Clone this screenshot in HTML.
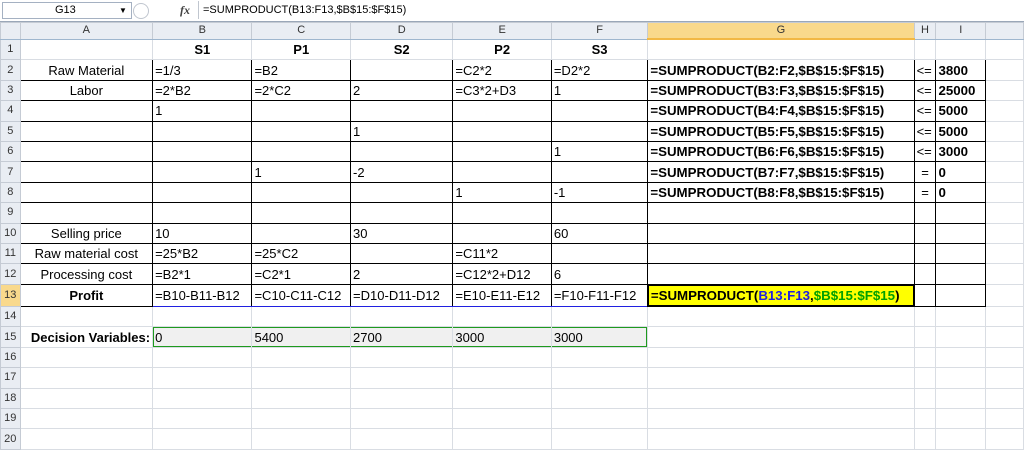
<!DOCTYPE html>
<html><head><meta charset="utf-8"><style>
body{margin:0;width:1024px;height:442px;overflow:hidden;background:#fff;font-family:"Liberation Sans",sans-serif;position:relative}
#fb{position:absolute;left:0;top:0;width:1024px;height:21px;background:#fff;border-bottom:1px solid #9aa7b8}
#nb{position:absolute;left:2px;top:2px;width:128px;height:15px;border:1px solid #a5b1c2;font-size:11px;line-height:15px}
table{position:absolute;left:0;top:22px;border-collapse:collapse;table-layout:fixed}
td{border:1px solid #d9dde3;font-size:13px;padding:0 2px;white-space:nowrap;overflow:hidden;height:19.4px;line-height:19px;color:#000}
tr.h td{height:15px;line-height:15px;background:#e9edf3;color:#333;font-size:11px;text-align:center;border-color:#c5cbd4;border-bottom:1px solid #9eb6ce}
td.rh{background:#e9edf3;color:#333;font-size:11px;text-align:center;border-color:#c5cbd4;padding:0}
td.b{border:1px solid #000}
.c{text-align:center}.bo{font-weight:bold}
.g{font-weight:bold;font-size:13.3px}
td.v{background:#f0f0f0;box-shadow:inset 0 1px 0 #1e9a1e,inset 0 -1px 0 #1e9a1e}
</style></head><body>
<div id="fb">
<div id="nb"><span style="position:absolute;left:52px">G13</span><span style="position:absolute;left:116px;font-size:8px">▼</span></div>
<div style="position:absolute;left:133px;top:3px;width:14px;height:14px;border:1px solid #c0c6cf;border-radius:8px"></div>
<div style="position:absolute;left:180px;top:3px;font-size:12px;font-style:italic;font-family:'Liberation Serif',serif;font-weight:bold;color:#444">fx</div>
<div style="position:absolute;left:198px;top:1px;width:826px;height:18px;border-left:1px solid #c0c6cf"></div>
<div style="position:absolute;left:203px;top:4px;font-size:11px">=SUMPRODUCT(B13:F13,$B$15:$F$15)</div>
</div>
<table>
<colgroup><col style="width:20px"><col style="width:133px"><col style="width:100px"><col style="width:99px"><col style="width:103px"><col style="width:99px"><col style="width:97px"><col style="width:267px"><col style="width:22px"><col style="width:50px"><col style="width:40px"></colgroup>
<tr class="h"><td></td><td>A</td><td>B</td><td>C</td><td>D</td><td>E</td><td>F</td><td style="background:#f9d98c;border-bottom:2px solid #f2b845">G</td><td>H</td><td>I</td><td></td></tr>
<tr><td class="rh">1</td><td></td><td class="c bo">S1</td><td class="c bo">P1</td><td class="c bo">S2</td><td class="c bo">P2</td><td class="c bo">S3</td><td></td><td></td><td></td><td></td></tr>
<tr><td class="rh">2</td><td class="b c">Raw Material</td><td class="b">=1/3</td><td class="b">=B2</td><td class="b"></td><td class="b">=C2*2</td><td class="b">=D2*2</td><td class="b g">=SUMPRODUCT(B2:F2,$B$15:$F$15)</td><td class="b">&lt;=</td><td class="b g">3800</td><td></td></tr>
<tr><td class="rh">3</td><td class="b c">Labor</td><td class="b">=2*B2</td><td class="b">=2*C2</td><td class="b">2</td><td class="b">=C3*2+D3</td><td class="b">1</td><td class="b g">=SUMPRODUCT(B3:F3,$B$15:$F$15)</td><td class="b">&lt;=</td><td class="b g">25000</td><td></td></tr>
<tr><td class="rh">4</td><td class="b"></td><td class="b">1</td><td class="b"></td><td class="b"></td><td class="b"></td><td class="b"></td><td class="b g">=SUMPRODUCT(B4:F4,$B$15:$F$15)</td><td class="b">&lt;=</td><td class="b g">5000</td><td></td></tr>
<tr><td class="rh">5</td><td class="b"></td><td class="b"></td><td class="b"></td><td class="b">1</td><td class="b"></td><td class="b"></td><td class="b g">=SUMPRODUCT(B5:F5,$B$15:$F$15)</td><td class="b">&lt;=</td><td class="b g">5000</td><td></td></tr>
<tr><td class="rh">6</td><td class="b"></td><td class="b"></td><td class="b"></td><td class="b"></td><td class="b"></td><td class="b">1</td><td class="b g">=SUMPRODUCT(B6:F6,$B$15:$F$15)</td><td class="b">&lt;=</td><td class="b g">3000</td><td></td></tr>
<tr><td class="rh">7</td><td class="b"></td><td class="b"></td><td class="b">1</td><td class="b">-2</td><td class="b"></td><td class="b"></td><td class="b g">=SUMPRODUCT(B7:F7,$B$15:$F$15)</td><td class="b c">=</td><td class="b g">0</td><td></td></tr>
<tr><td class="rh">8</td><td class="b"></td><td class="b"></td><td class="b"></td><td class="b"></td><td class="b">1</td><td class="b">-1</td><td class="b g">=SUMPRODUCT(B8:F8,$B$15:$F$15)</td><td class="b c">=</td><td class="b g">0</td><td></td></tr>
<tr><td class="rh">9</td><td class="b"></td><td class="b"></td><td class="b"></td><td class="b"></td><td class="b"></td><td class="b"></td><td class="b"></td><td class="b"></td><td class="b"></td><td></td></tr>
<tr><td class="rh">10</td><td class="b c">Selling price</td><td class="b">10</td><td class="b"></td><td class="b">30</td><td class="b"></td><td class="b">60</td><td class="b"></td><td class="b"></td><td class="b"></td><td></td></tr>
<tr><td class="rh">11</td><td class="b c">Raw material cost</td><td class="b">=25*B2</td><td class="b">=25*C2</td><td class="b"></td><td class="b">=C11*2</td><td class="b"></td><td class="b"></td><td class="b"></td><td class="b"></td><td></td></tr>
<tr><td class="rh">12</td><td class="b c">Processing cost</td><td class="b">=B2*1</td><td class="b">=C2*1</td><td class="b">2</td><td class="b">=C12*2+D12</td><td class="b">6</td><td class="b"></td><td class="b"></td><td class="b"></td><td></td></tr>
<tr><td class="rh" style="background:#f9d98c">13</td><td class="b c bo">Profit</td><td class="b" style="border-color:#000 #000 #2020e0 #2020e0">=B10-B11-B12</td><td class="b" style="border-bottom-color:#2020e0">=C10-C11-C12</td><td class="b" style="border-bottom-color:#2020e0">=D10-D11-D12</td><td class="b" style="border-bottom-color:#2020e0">=E10-E11-E12</td><td class="b" style="border-bottom-color:#2020e0;border-right-color:#2020e0">=F10-F11-F12</td><td class="b g" style="background:#ffff00;border:2px solid #000">=SUMPRODUCT(<span style="color:#2020e0">B13:F13</span>,<span style="color:#00a000">$B$15:$F$15</span>)</td><td class="b"></td><td class="b"></td><td></td></tr>
<tr><td class="rh">14</td><td></td><td></td><td></td><td></td><td></td><td></td><td></td><td></td><td></td><td></td></tr>
<tr><td class="rh">15</td><td class="bo" style="text-align:right">Decision Variables:</td><td class="v" style="box-shadow:inset 0 1px 0 #1e9a1e,inset 0 -1px 0 #1e9a1e,inset 1px 0 0 #1e9a1e">0</td><td class="v">5400</td><td class="v">2700</td><td class="v">3000</td><td class="v" style="box-shadow:inset 0 1px 0 #1e9a1e,inset 0 -1px 0 #1e9a1e,inset -1px 0 0 #1e9a1e">3000</td><td></td><td></td><td></td><td></td></tr>
<tr><td class="rh">16</td><td></td><td></td><td></td><td></td><td></td><td></td><td></td><td></td><td></td><td></td></tr>
<tr><td class="rh">17</td><td></td><td></td><td></td><td></td><td></td><td></td><td></td><td></td><td></td><td></td></tr>
<tr><td class="rh">18</td><td></td><td></td><td></td><td></td><td></td><td></td><td></td><td></td><td></td><td></td></tr>
<tr><td class="rh">19</td><td></td><td></td><td></td><td></td><td></td><td></td><td></td><td></td><td></td><td></td></tr>
<tr><td class="rh">20</td><td></td><td></td><td></td><td></td><td></td><td></td><td></td><td></td><td></td><td></td></tr>
</table>
</body></html>
